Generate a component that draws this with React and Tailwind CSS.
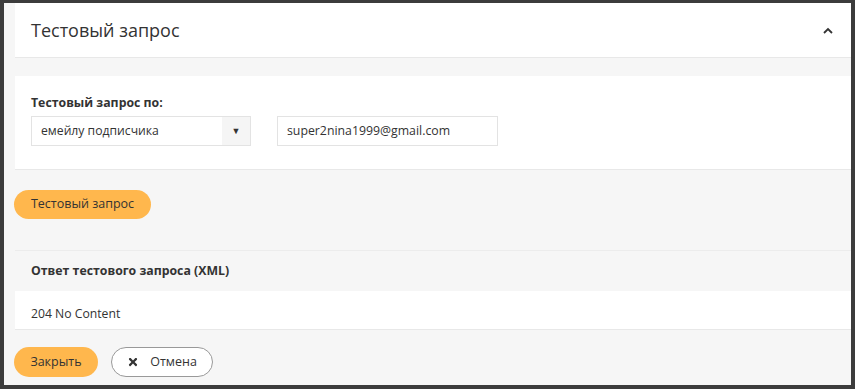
import { FaTimes } from 'react-icons/fa'

export default function App() {
  return (
    <div className="w-[855px] h-[389px] bg-[#3c3c3c] pt-[3px] pl-[4px] pr-[4px] pb-[4px]" style={{ fontFamily: '"Open Sans", sans-serif' }}>
      <div className="h-full bg-[#f6f6f6] flex flex-col text-[#333]">
        <div className="ml-[11px] h-[55px] bg-white border-b border-[#e8e8e8] flex items-center justify-between pl-[16px] pr-[18px]">
          <h1 className="text-[18px] font-normal text-[#333]">Тестовый запрос</h1>
          <svg width="10" height="7" viewBox="0 0 10 7" fill="none" stroke="#333" strokeWidth="1.8">
            <path d="M1 6l4-4 4 4" />
          </svg>
        </div>

        <div className="ml-[11px] mt-[18px] h-[94px] bg-white border-b border-[#e8e8e8] pl-[16px] pt-[18px]">
          <p className="text-[12.3px] font-bold leading-[18px] text-[#333]">Тестовый запрос по:</p>
          <div className="flex gap-[26px] mt-[4px]">
            <div className="w-[220px] h-[30px] border border-[#e3e3e3] flex">
              <span className="flex-1 text-[12.2px] pl-[9px] leading-[28px] text-[#333]">емейлу подписчика</span>
              <span className="w-[28px] bg-[#f5f5f5] flex items-center justify-center text-[9px] text-[#333]">▼</span>
            </div>
            <div className="w-[221px] h-[30px] border border-[#e3e3e3] text-[12.3px] pl-[9px] leading-[28px] text-[#333]">
              super2nina1999@gmail.com
            </div>
          </div>
        </div>

        <div className="ml-[10px] mt-[20px]">
          <button className="h-[29px] w-[137px] rounded-full bg-[#ffb74d] text-[12.5px] text-[#333]">Тестовый запрос</button>
        </div>

        <div className="ml-[11px] mt-[31px] bg-[#f6f6f6] border-t border-[#ececec] h-[41px] pl-[16px] flex items-center">
          <p className="text-[12.3px] font-bold text-[#333] mt-[1px]">Ответ тестового запроса (XML)</p>
        </div>
        <div className="ml-[11px] h-[39px] bg-white border-b border-[#e8e8e8] pl-[16px] flex items-center">
          <p className="text-[12.2px] text-[#333] mt-[9px]">204 No Content</p>
        </div>

        <div className="ml-[10px] mt-[17px] flex gap-[13px]">
          <button className="h-[30px] w-[84px] rounded-full bg-[#ffb74d] text-[12.5px] text-[#333]">Закрыть</button>
          <button className="h-[30px] w-[102px] rounded-full bg-white border border-[#999] text-[12.5px] text-[#333] flex items-center justify-center gap-[11px]">
            <FaTimes className="w-[12px] h-[12px]" />
            Отмена
          </button>
        </div>
      </div>
    </div>
  )
}
